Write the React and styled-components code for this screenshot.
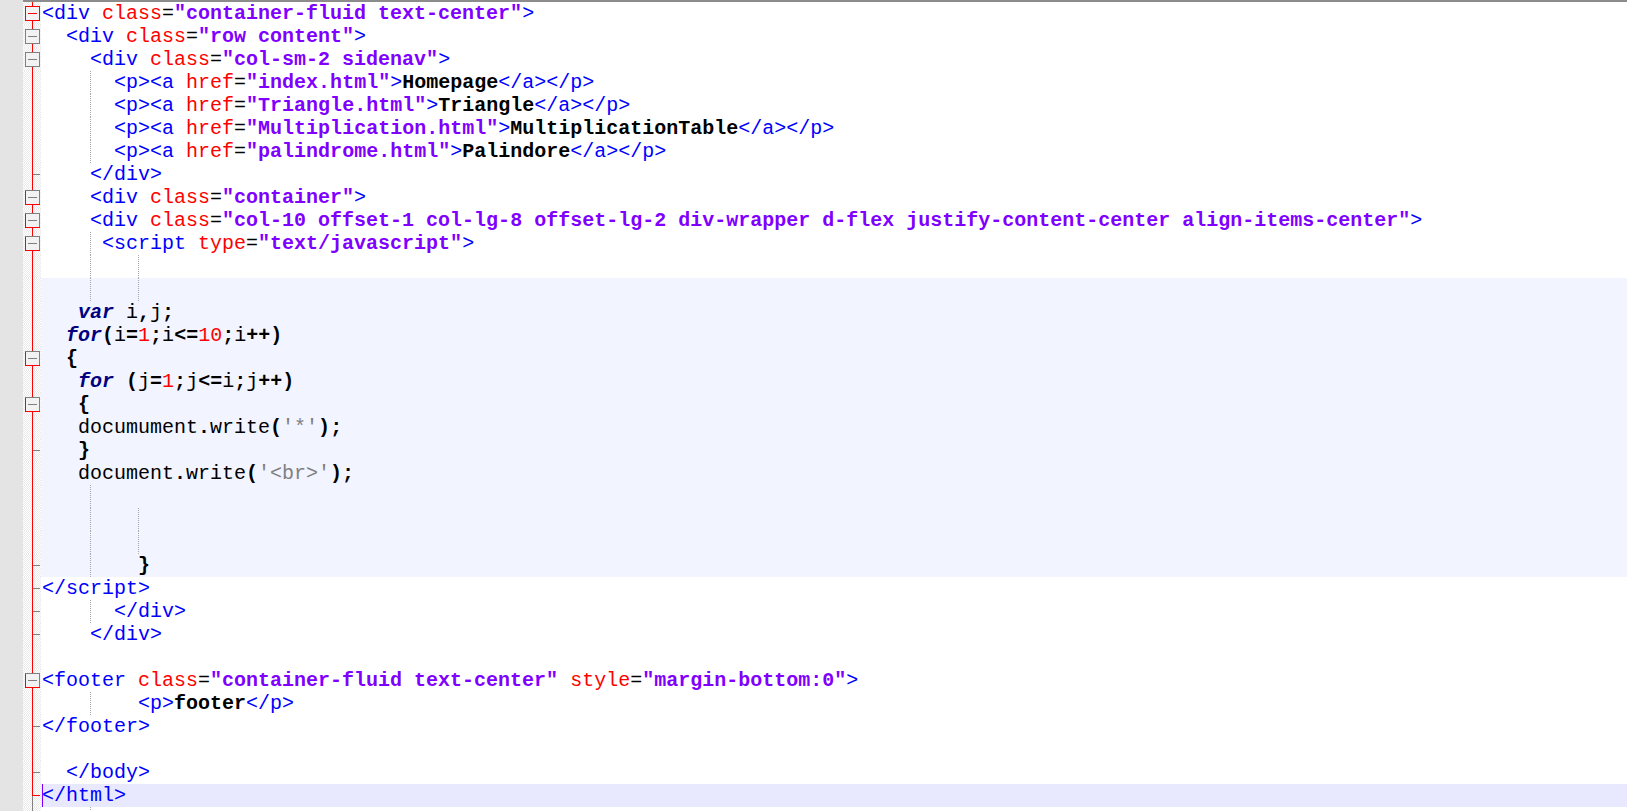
import React from "react";
import styled, { createGlobalStyle, css } from "styled-components";

const GlobalStyle = createGlobalStyle`
  html, body { margin: 0; padding: 0; background: #ffffff; overflow: hidden; }
  body { font-family: "Liberation Mono", "Courier New", monospace; }
`;

const Window = styled.div`
  display: flex;
  width: 100vw;
  height: 100vh;
  overflow: hidden;
  background: #ffffff;
`;

const SelectionMargin = styled.div`
  flex: none;
  width: 23px;
  background: #e4e4e4;
`;

const Editor = styled.div`
  flex: 1;
  min-width: 0;
  display: flex;
  flex-direction: column;
  border-top: 2px solid #8c8c8c;
`;

const Line = styled.div`
  flex: none;
  display: flex;
  height: 23px;
`;

const FoldCell = styled.div`
  flex: none;
  width: 18px;
  background: repeating-conic-gradient(#e9e9e9 0 25%, #ffffff 0 50%) 0 0 / 2px 2px;
`;

const bgFor = {
  plain: "#ffffff",
  script: "#f2f4ff",
  current: "#e8e8ff",
};

const Code = styled.div`
  position: relative;
  flex: 1;
  padding-left: 1px;
  background: ${(p) => bgFor[p.$bg]};
  font-family: "Liberation Mono", "Courier New", monospace;
  font-size: 20px;
  line-height: 23px;
  white-space: pre;
  color: #000000;
`;

const tokStyles = {
  ws: css``,
  tag: css`color: #0000ff;`,
  attr: css`color: #ff0000;`,
  eq: css`color: #000000;`,
  val: css`color: #8000ff; font-weight: bold;`,
  text: css`color: #000000; font-weight: bold;`,
  kw: css`color: #000080; font-weight: bold; font-style: italic;`,
  num: css`color: #ff0000;`,
  str: css`color: #808080;`,
  id: css`color: #000000;`,
  op: css`color: #000000; font-weight: bold;`,
};

const Tok = styled.span`
  ${(p) => tokStyles[p.$k]}
`;

const Guide = styled.span`
  position: absolute;
  top: 0;
  bottom: 0;
  left: ${(p) => 1 + p.$col * 12}px;
  width: 0;
  border-left: 1px dotted #a8a8a8;
`;

const Caret = styled.span`
  position: absolute;
  top: 0;
  bottom: 0;
  left: 1px;
  width: 1px;
  background: #8000ff;
`;

const FoldSvg = styled.svg`
  display: block;
  width: 18px;
  height: 23px;
`;

function tokenizeHtml(s) {
  const toks = [];
  let i = 0;
  let inTag = false;
  while (i < s.length) {
    const rest = s.slice(i);
    let m;
    if ((m = rest.match(/^\s+/))) toks.push(["ws", m[0]]);
    else if ((m = rest.match(/^<\/?[a-zA-Z]+/))) {
      toks.push(["tag", m[0]]);
      inTag = true;
    } else if (rest[0] === ">") {
      m = [">"];
      toks.push(["tag", ">"]);
      inTag = false;
    } else if (inTag && (m = rest.match(/^"[^"]*"/))) toks.push(["val", m[0]]);
    else if (inTag && rest[0] === "=") {
      m = ["="];
      toks.push(["eq", "="]);
    } else if (inTag && (m = rest.match(/^[a-zA-Z-]+/))) toks.push(["attr", m[0]]);
    else if ((m = rest.match(/^[^<]+/))) toks.push(["text", m[0]]);
    else {
      m = [rest[0]];
      toks.push(["text", rest[0]]);
    }
    i += m[0].length;
  }
  return toks;
}

function tokenizeJs(s) {
  const toks = [];
  const re = /(\s+)|(\b(?:var|for)\b)|(\d+)|('[^']*')|([A-Za-z_]\w*)|([^\sA-Za-z_\d'])/g;
  let m;
  while ((m = re.exec(s))) {
    if (m[1]) toks.push(["ws", m[1]]);
    else if (m[2]) toks.push(["kw", m[2]]);
    else if (m[3]) toks.push(["num", m[3]]);
    else if (m[4]) toks.push(["str", m[4]]);
    else if (m[5]) toks.push(["id", m[5]]);
    else if (m[6]) toks.push(["op", m[6]]);
  }
  return toks;
}

const LINES = [
  { h: '<div class="container-fluid text-center">', f: "boxRed" },
  { h: '  <div class="row content">', f: "boxGray" },
  { h: '    <div class="col-sm-2 sidenav">', f: "boxGray" },
  { h: '      <p><a href="index.html">Homepage</a></p>', g: [4] },
  { h: '      <p><a href="Triangle.html">Triangle</a></p>', g: [4] },
  { h: '      <p><a href="Multiplication.html">MultiplicationTable</a></p>', g: [4] },
  { h: '      <p><a href="palindrome.html">Palindore</a></p>', g: [4] },
  { h: "    </div>", f: "tick" },
  { h: '    <div class="container">', f: "boxMixed" },
  {
    h: '    <div class="col-10 offset-1 col-lg-8 offset-lg-2 div-wrapper d-flex justify-content-center align-items-center">',
    f: "boxMixed",
  },
  { h: '     <script type="text/javascript">', f: "boxMixed", g: [4] },
  { h: "", g: [4, 8] },
  { j: "", g: [4, 8] },
  { j: "   var i,j;" },
  { j: "  for(i=1;i<=10;i++)" },
  { j: "  {", f: "boxMixed" },
  { j: "   for (j=1;j<=i;j++)" },
  { j: "   {", f: "boxMixed" },
  { j: "   documument.write('*');" },
  { j: "   }", f: "tick" },
  { j: "   document.write('<br>');" },
  { j: "", g: [4] },
  { j: "", g: [4, 8] },
  { j: "", g: [4, 8] },
  { j: "        }", g: [4], f: "tick" },
  { h: "</script>", f: "tick" },
  { h: "      </div>", g: [4], f: "tick" },
  { h: "    </div>", f: "tick" },
  { h: "" },
  { h: '<footer class="container-fluid text-center" style="margin-bottom:0">', f: "boxMixed" },
  { h: "        <p>footer</p>", g: [4] },
  { h: "</footer>", f: "tick" },
  { h: "" },
  { h: "  </body>", f: "tick" },
  { h: "</html>", f: "end", current: true },
  { h: "", g: [4], f: "tail" },
];

const RED = "#ff0000";
const GRAY = "#808080";

function FoldMark({ kind = "line" }) {
  const isBox = kind.startsWith("box");
  const boxStroke = kind === "boxRed" ? RED : GRAY;
  return (
    <FoldSvg viewBox="0 0 18 23" shapeRendering="crispEdges">
      {kind === "end" ? (
        <>
          <line x1="9.5" y1="0" x2="9.5" y2="12" stroke={RED} />
          <line x1="9.5" y1="12" x2="9.5" y2="23" stroke={GRAY} />
          <line x1="10" y1="11.5" x2="17" y2="11.5" stroke={RED} />
        </>
      ) : kind === "tail" ? (
        <line x1="9.5" y1="0" x2="9.5" y2="23" stroke={GRAY} />
      ) : (
        <line x1="9.5" y1="0" x2="9.5" y2="23" stroke={RED} />
      )}
      {kind === "tick" && <line x1="10" y1="11.5" x2="17" y2="11.5" stroke={GRAY} />}
      {isBox && (
        <>
          <rect x="2.5" y="4.5" width="14" height="14" fill="#f2f2f2" stroke={boxStroke} />
          {kind === "boxMixed" && <path d="M2.5 4.5V18.5H16.5" fill="none" stroke={RED} />}
          <line x1="5" y1="11.5" x2="14" y2="11.5" stroke={boxStroke} />
        </>
      )}
    </FoldSvg>
  );
}

function CodeLine({ line }) {
  const isJs = line.j !== undefined;
  const toks = isJs ? tokenizeJs(line.j) : tokenizeHtml(line.h);
  const bg = line.current ? "current" : isJs ? "script" : "plain";
  return (
    <Line>
      <FoldCell>
        <FoldMark kind={line.f} />
      </FoldCell>
      <Code $bg={bg}>
        {toks.map(([k, t], i) => (
          <Tok key={i} $k={k}>
            {t}
          </Tok>
        ))}
        {(line.g || []).map((c) => (
          <Guide key={c} $col={c} />
        ))}
        {line.current && <Caret />}
      </Code>
    </Line>
  );
}

export default function App() {
  return (
    <>
      <GlobalStyle />
      <Window>
        <SelectionMargin />
        <Editor>
          {LINES.map((line, i) => (
            <CodeLine key={i} line={line} />
          ))}
        </Editor>
      </Window>
    </>
  );
}
